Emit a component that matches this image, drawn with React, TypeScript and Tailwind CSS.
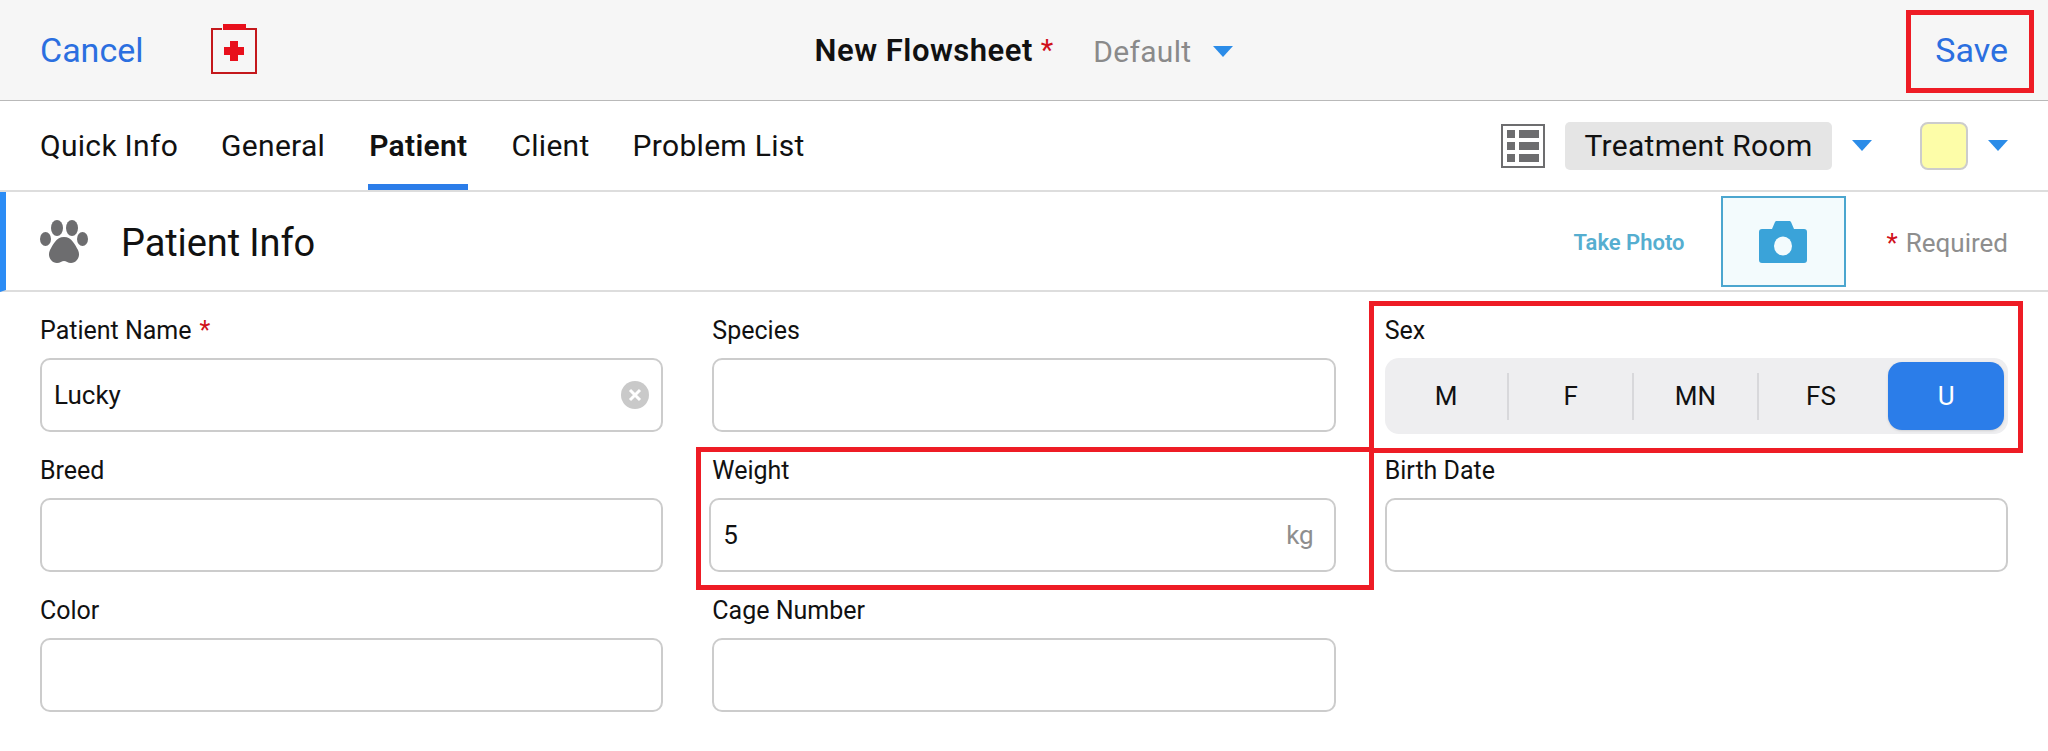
const tabs = ["Quick Info", "General", "Patient", "Client", "Problem List"];
const sexes = ["M", "F", "MN", "FS", "U"];

function Caret() {
  return (
    <svg width="20" height="11" viewBox="0 0 20 11" className="shrink-0">
      <path d="M0 0H20L10 11Z" fill="#2b8ce8" />
    </svg>
  );
}

function KitIcon() {
  return (
    <svg width="46" height="50" viewBox="0 0 46 50" className="shrink-0">
      <path d="M11 5H1V49H45V5H35" fill="none" stroke="#c4181c" strokeWidth="2" />
      <rect x="12" y="0" width="23" height="6" fill="#e8101c" />
      <path d="M19 17H27V23H33V31H27V37H19V31H13V23H19Z" fill="#e8101c" />
    </svg>
  );
}

function ListIcon() {
  return (
    <svg width="44" height="44" viewBox="0 0 44 44" className="shrink-0">
      <rect x="1" y="1" width="42" height="42" fill="none" stroke="#6d6d6f" strokeWidth="2" />
      <rect x="6" y="6" width="8" height="8" fill="#6d6d6f" />
      <rect x="18" y="6" width="20" height="8" fill="#6d6d6f" />
      <rect x="6" y="18" width="8" height="8" fill="#6d6d6f" />
      <rect x="18" y="18" width="20" height="8" fill="#6d6d6f" />
      <rect x="6" y="30" width="8" height="8" fill="#6d6d6f" />
      <rect x="18" y="30" width="20" height="8" fill="#6d6d6f" />
    </svg>
  );
}

function PawIcon() {
  return (
    <svg width="48" height="44" viewBox="0 0 48 44" className="shrink-0">
      <ellipse cx="17" cy="9" rx="6" ry="8" fill="#6d6d6f" />
      <ellipse cx="32" cy="9" rx="6" ry="8" fill="#6d6d6f" />
      <ellipse cx="5.5" cy="20" rx="5.5" ry="7" fill="#6d6d6f" />
      <ellipse cx="42.5" cy="20" rx="5.5" ry="7" fill="#6d6d6f" />
      <path d="M24 18C32 18 35 26 38 31C41 37 37 44 31 44C28 44 26 42 24 42C22 42 20 44 17 44C11 44 7 37 10 31C13 26 16 18 24 18Z" fill="#6d6d6f" />
    </svg>
  );
}

function CameraIcon() {
  return (
    <svg width="48" height="42" viewBox="0 0 48 42" className="mt-0.5">
      <path d="M3 8H13L16 1C16.500 0.300 17 0 18 0H30C31 0 31.500 0.300 32 1L35 8H45C47 8 48 9 48 11V39C48 41 47 42 45 42H3C1 42 0 41 0 39V11C0 9 1 8 3 8Z" fill="#3aa3d9" />
      <ellipse cx="24" cy="25" rx="9" ry="9.500" fill="#f3fbfd" />
    </svg>
  );
}

function ClearIcon() {
  return (
    <svg width="28" height="28" viewBox="0 0 28 28" className="shrink-0">
      <circle cx="14" cy="14" r="14" fill="#c9c9c9" />
      <path d="M9 9L19 19M19 9L9 19" stroke="#fff" strokeWidth="3" />
    </svg>
  );
}

function Field({ label, required, children, className }: { label: string; required?: boolean; children?: React.ReactNode; className?: string }) {
  return (
    <div>
      <div className="h-8 mb-3 pt-px text-[25px] leading-8 text-[#111]">
        {label}
        {required && <span className="ml-2 text-[#d0111b]">*</span>}
      </div>
      <div className={"h-[74px] flex items-center justify-between pl-3 border-2 border-[#cccccc] rounded-[10px] bg-white text-[26px] text-[#111] " + (className || "")}>
        {children}
      </div>
    </div>
  );
}

export default function App() {
  return (
    <div className="relative min-h-[751px] bg-white overflow-hidden font-['Roboto',sans-serif]">
      {/* top bar */}
      <div className="h-[101px] flex items-center px-10 bg-[#f6f6f6] border-b border-[#b9b9b9]">
        <div className="flex-1 flex items-center">
          <span className="text-[34px] text-[#2b6fe0]">Cancel</span>
          <div className="ml-[67px] -mt-0.5"><KitIcon /></div>
        </div>
        <div className="flex items-center pt-0.5">
          <span className="text-[31px] font-semibold tracking-[0.5px] text-[#111]">New Flowsheet</span>
          <span className="ml-2 text-[29px] text-[#d0111b]">*</span>
          <span className="ml-10 text-[30px] tracking-[0.3px] text-[#8a8a8a]">Default</span>
          <div className="ml-[22px]"><Caret /></div>
        </div>
        <div className="flex-1 flex justify-end">
          <span className="text-[34px] text-[#2b6fe0]">Save</span>
        </div>
      </div>

      {/* tabs */}
      <div className="h-[91px] flex items-center justify-between px-10 border-b-2 border-[#dddddd]">
        <div className="flex h-full gap-[43px]">
          {tabs.map((t) => (
            <div key={t} className={"flex items-center text-[30px] tracking-[0.3px] text-[#111] " + (t === "Patient" ? "font-semibold border-b-[6px] border-[#2b7de9] pt-[6px] px-px" : "")}>
              {t}
            </div>
          ))}
        </div>
        <div className="flex items-center">
          <ListIcon />
          <div className="ml-5 h-12 w-[267px] flex items-center justify-center rounded-[5px] bg-[#e5e5e5] text-[30px] tracking-[0.3px] text-[#111]">Treatment Room</div>
          <div className="ml-5"><Caret /></div>
          <div className="ml-[48px] w-12 h-12 rounded-lg border-2 border-[#cccccc] bg-[#fdfda8]" />
          <div className="ml-5"><Caret /></div>
        </div>
      </div>

      {/* section header */}
      <div className="h-[100px] flex items-center justify-between pl-[34px] pr-10 border-l-[6px] border-l-[#2b8cf5] border-b-2 border-b-[#dddddd]">
        <div className="flex items-center">
          <PawIcon />
          <span className="ml-[33px] pt-1 text-[38px] tracking-[-0.1px] text-[#111]">Patient Info</span>
        </div>
        <div className="flex items-center">
          <span className="pt-0.5 text-[22px] font-semibold text-[#55aed0]">Take Photo</span>
          <div className="ml-9 w-[125px] h-[91px] flex items-center justify-center border-2 border-[#4ba6cf] bg-[#f3fbfd]">
            <CameraIcon />
          </div>
          <span className="ml-[41px] pt-1 text-[26px] text-[#d0111b]">*</span>
          <span className="ml-2 pt-1 text-[26px] text-[#8e8e8e]">Required</span>
        </div>
      </div>

      {/* form */}
      <div className="grid grid-cols-3 gap-x-[49px] gap-y-[22px] px-10 pt-[22px]">
        <Field label="Patient Name" required className="pr-3">
          <span>Lucky</span>
          <ClearIcon />
        </Field>
        <Field label="Species" />
        <div>
          <div className="h-8 mb-3 pt-px text-[25px] leading-8 text-[#111]">Sex</div>
          <div className="h-[76px] -mb-0.5 grid grid-cols-5 items-center rounded-[14px] bg-[#eeeef0] text-[26px] text-[#111]">
            {sexes.map((s, i) =>
              s === "U" ? (
                <div key={s} className="h-[68px] ml-[5px] mr-1 flex items-center justify-center rounded-[14px] bg-[#2b7de9] text-white shadow-sm">
                  {s}
                </div>
              ) : (
                <div key={s} className={"h-[47px] flex items-center justify-center " + (i < 3 ? "border-r-2 border-[#d8d8db]" : "")}>
                  {s}
                </div>
              )
            )}
          </div>
        </div>
        <Field label="Breed" />
        <Field label="Weight" className="-ml-[3px] pr-5">
          <span>5</span>
          <span className="text-[#8e8e8e]">kg</span>
        </Field>
        <Field label="Birth Date" />
        <Field label="Color" />
        <Field label="Cage Number" />
      </div>

      {/* red annotation boxes */}
      <div className="absolute left-[1906px] top-[10px] w-[128px] h-[83px] border-[5px] border-[#ee1c25]" />
      <div className="absolute left-[1369px] top-[301px] w-[654px] h-[152px] border-[5px] border-[#ee1c25]" />
      <div className="absolute left-[696px] top-[447px] w-[678px] h-[143px] border-[5px] border-[#ee1c25]" />
    </div>
  );
}
